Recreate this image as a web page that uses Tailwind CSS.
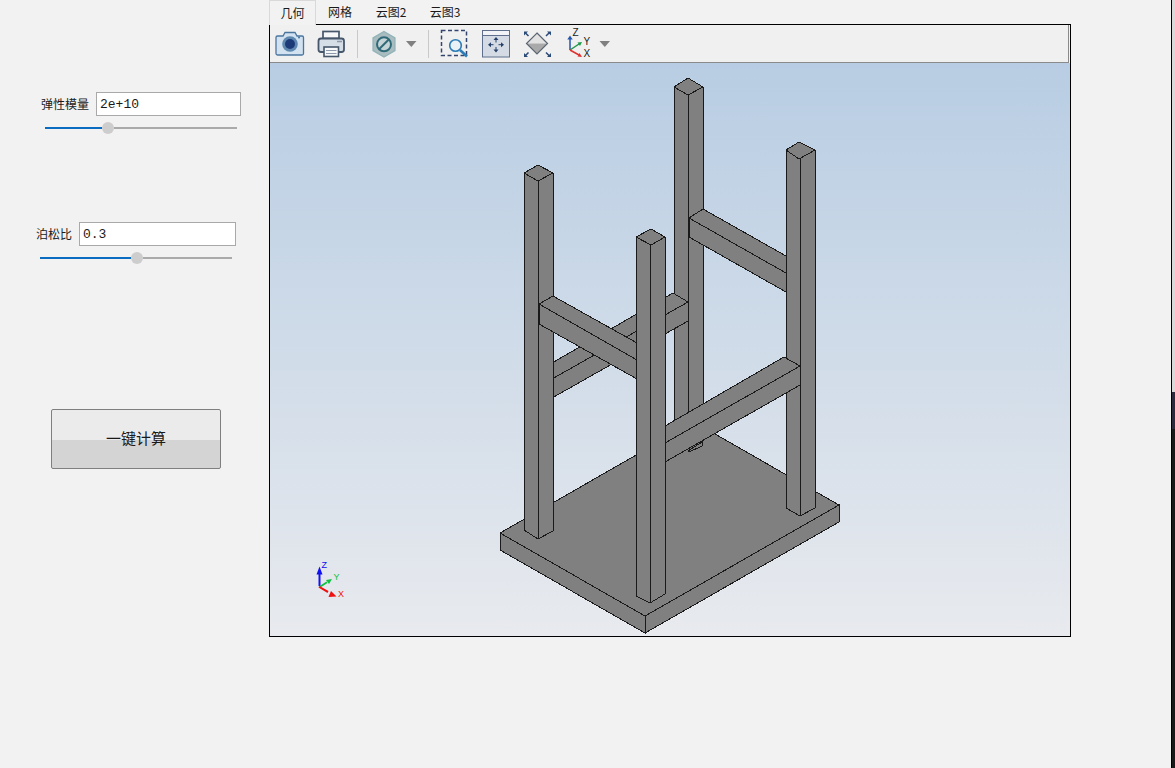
<!DOCTYPE html>
<html lang="zh">
<head>
    <meta charset="UTF-8">
    <title>几何</title>
    <script src="https://cdn.jsdelivr.net/npm/@tailwindcss/browser@4"></script>
</head>
<body class="bg-[#f2f2f2] font-['Noto_Sans_CJK_SC',sans-serif] text-[#1a1a1a] overflow-hidden">
<div class="flex h-[768px] w-[1175px]">

    <!-- 左侧参数 -->
    <aside class="w-[269px] shrink-0 pt-[92px] text-[12px]">
        <div class="flex items-center h-[24px] pl-[41px] gap-[7px]">
            <span class="w-[48px] whitespace-nowrap">弹性模量</span>
            <input value="2e+10" class="w-[145px] h-[24px] bg-white border border-[#a9a9a9] pl-[3px] text-[13px] font-['Liberation_Mono',monospace]">
        </div>
        <div class="flex items-center h-[12px] w-[192px] ml-[45px] mt-[6px]">
            <div class="w-[57px] h-[2px] bg-[#0a6cc0]"></div>
            <div class="w-[12px] h-[12px] rounded-full bg-[#cdcdcd] shrink-0"></div>
            <div class="flex-1 h-[2px] bg-[#aaaaaa]"></div>
        </div>

        <div class="flex items-center h-[24px] pl-[36px] gap-[7px] mt-[88px]">
            <span class="w-[36px] whitespace-nowrap">泊松比</span>
            <input value="0.3" class="w-[157px] h-[24px] bg-white border border-[#a9a9a9] pl-[3px] text-[13px] font-['Liberation_Mono',monospace]">
        </div>
        <div class="flex items-center h-[12px] w-[192px] ml-[40px] mt-[6px]">
            <div class="w-[91px] h-[2px] bg-[#0a6cc0]"></div>
            <div class="w-[12px] h-[12px] rounded-full bg-[#cdcdcd] shrink-0"></div>
            <div class="flex-1 h-[2px] bg-[#aaaaaa]"></div>
        </div>

        <button class="block w-[170px] h-[60px] ml-[51px] mt-[145px] pb-[2px] rounded-[2px] border border-[#7f7f7f] text-[15px] bg-[linear-gradient(#ebebeb_0,#ebebeb_30px,#d4d4d4_30px)]">一键计算</button>
    </aside>

    <!-- 主区域 -->
    <main class="w-[903px] shrink-0 border-r border-black">
        <div class="flex h-[25px] text-[12px] w-[802px]">
            <div class="relative z-10 w-[47px] h-[25px] bg-[#f2f2f2] border border-b-0 border-[#d9d9d9] flex items-center justify-center">几何</div>
            <div class="w-[48px] h-[24px] flex items-center justify-center">网格</div>
            <div class="w-[54px] h-[24px] flex items-center justify-center">云图2</div>
            <div class="w-[54px] h-[24px] flex items-center justify-center">云图3</div>
        </div>

        <div class="w-[802px] h-[613px] -mt-px border border-black flex flex-col">
            <!-- 工具栏 -->
            <div class="h-[38px] mr-px flex items-start pt-[4px] pl-[5px] bg-[#f0f0f0] border-b border-r border-[#8a8a8a] shrink-0">
                <svg class="w-[30px] h-[30px]" viewBox="275 29 30 30">
                    <path d="M277.500 36h5.500l2-3.500h10l2 3.500h5a1.500 1.500 0 0 1 1.500 1.500v16a1.500 1.500 0 0 1-1.500 1.500h-24.500a1.500 1.500 0 0 1-1.500-1.500v-16a1.500 1.500 0 0 1 1.500-1.500z" fill="#d3e2f0" stroke="#4a759f" stroke-width="1.300"/>
                    <circle cx="290" cy="44" r="7.800" fill="#5f88b0"/>
                    <circle cx="290" cy="44" r="5" fill="#1d3a78"/>
                    <circle cx="299" cy="37.500" r="1" fill="#44719f"/>
                </svg>
                <svg class="w-[30px] h-[30px] ml-[11px]" viewBox="316 29 30 30">
                    <rect x="323" y="31.500" width="16" height="7" fill="#f6f8fa" stroke="#46566b" stroke-width="1.700"/>
                    <rect x="318.500" y="38.500" width="25.500" height="13.500" rx="2.500" fill="#d5dde6" stroke="#46566b" stroke-width="1.800"/>
                    <rect x="324" y="47" width="14.500" height="9.500" fill="#f6f8fa" stroke="#46566b" stroke-width="1.600"/>
                    <path d="M326 50.500h10.500M326 53.500h10.500" stroke="#8b99aa"/>
                    <path d="M337 41.500h5" stroke="#8b99aa" stroke-width="1.500"/>
                </svg>
                <div class="w-px h-[28px] mt-px ml-[11px] bg-[#c9c9c9]"></div>
                <svg class="w-[26px] h-[30px] ml-[13px]" viewBox="371 29 26 30">
                    <path d="M384 31.500l11 6.400v12.700l-11 6.400-11-6.400v-12.700z" fill="#a9bcc0" stroke="#8fb2b6" stroke-width="1.200"/>
                    <circle cx="384" cy="44.300" r="7" fill="#c5d4d6" stroke="#2f6a78" stroke-width="2"/>
                    <path d="M379 49.300l10-10" stroke="#2f6a78" stroke-width="2"/>
                </svg>
                <svg class="w-[12px] h-[30px] ml-[8px]" viewBox="405 29 12 30">
                    <path d="M406 41h10.500l-5.200 6z" fill="#808080"/>
                </svg>
                <div class="w-px h-[28px] mt-px ml-[11px] bg-[#c9c9c9]"></div>
                <svg class="w-[29px] h-[30px] ml-[11px]" viewBox="440 29 29 30">
                    <rect x="441.500" y="30.500" width="25" height="25" fill="none" stroke="#33456e" stroke-width="1.500" stroke-dasharray="4 2.500"/>
                    <circle cx="455.500" cy="45.500" r="5.800" fill="#eaf2f8" stroke="#2c7cb6" stroke-width="1.600"/>
                    <path d="M460 50l7 6.500" stroke="#2c7cb6" stroke-width="2.600"/>
                </svg>
                <svg class="w-[30px] h-[30px] ml-[12px]" viewBox="481 29 30 30">
                    <rect x="482.500" y="30.500" width="27" height="26.500" fill="#d5dbe4" stroke="#5d6f8c"/>
                    <rect x="483" y="31" width="26" height="4" fill="#f1f3f6"/>
                    <path d="M483 35.500h26" stroke="#5d6f8c"/>
                    <path d="M496 37l2.500 3h-5zM496 52.500l-2.500-3h5zM488 44.700l3-2.500v5zM504 44.700l-3-2.500v5z" fill="#24406b"/>
                    <path d="M496 39.500v3M496 47v3M490.500 44.700h3M498.500 44.700h3" stroke="#24406b"/>
                </svg>
                <svg class="w-[30px] h-[30px] ml-[11px]" viewBox="522 29 30 30">
                    <path d="M537 33l10.500 10.500h-21z" fill="#e2e2e2"/>
                    <path d="M526.500 43.500h21l-10.500 10.500z" fill="#a9a9a9"/>
                    <path d="M537 33l10.500 10.500-10.500 10.500-10.500-10.500z" fill="none" stroke="#5b6673" stroke-width="1.200"/>
                    <path d="M525 32.500l3.500 3.500M549.500 32.500l-3.500 3.500M525 56l3.500-3.500M549.500 56l-3.500-3.500" stroke="#2a4a78" stroke-width="1.500"/>
                    <path d="M524 31.500h4l-4 4zM551 31.500h-4l4 4zM524 57v-4l4 4zM551 57v-4l-4 4z" fill="#2a4a78"/>
                </svg>
                <svg class="w-[28px] h-[34px] -mt-[2px] ml-[14px]" viewBox="566 27 28 34">
                    <path d="M570 50v-12" stroke="#2456b0" stroke-width="1.500"/>
                    <path d="M570 35.500l2.700 4h-5.400z" fill="#2456b0"/>
                    <path d="M570 50l9-6" stroke="#1f9a4a" stroke-width="1.500"/>
                    <path d="M582 42l-2 4-2.500-3.500z" fill="#1f9a4a"/>
                    <path d="M570 50l9 5" stroke="#e03030" stroke-width="1.500"/>
                    <path d="M582 57l-4.500-.4 2-3.500z" fill="#e03030"/>
                    <text x="572.500" y="36" font-size="10" font-family="Liberation Sans" fill="#222">Z</text>
                    <text x="583.500" y="44.500" font-size="10" font-family="Liberation Sans" fill="#222">Y</text>
                    <text x="583.500" y="57" font-size="10" font-family="Liberation Sans" fill="#222">X</text>
                </svg>
                <svg class="w-[12px] h-[30px] ml-[5px]" viewBox="599 29 12 30">
                    <path d="M599.500 41h10.500l-5.200 6z" fill="#808080"/>
                </svg>
            </div>

            <!-- 三维视图 -->
            <div class="flex-1 bg-linear-to-b from-[#b8cde3] to-[#e8eaee]">
                <svg class="block w-[800px] h-[573px]" viewBox="270 63 800 573" fill="#808080" stroke="#1a1a1a" stroke-width="1">
                    <g transform="translate(-1 0)" shape-rendering="crispEdges">
                        <!-- 底板 -->
                        <polygon points="501,533 695,422 840,505 646,616"/>
                        <polygon points="501,533 646,616 646,633 501,550"/>
                        <polygon points="646,616 840,505 840,522 646,633"/>
                        <!-- 后柱 -->
                        <polygon points="675,87 689,78 704,87 704,430 675,430"/>
                        <path d="M675 87L689 95L704 87M689 95V430" fill="none"/>
                        <!-- 左后横梁 -->
                        <polygon points="553,363 674,293 689,302 689,321 553,398"/>
                        <path d="M553 379L689 302" fill="none"/>
                        <!-- 左柱 -->
                        <polygon points="525,173 539,165 554,173 554,531 539,539 525,530"/>
                        <path d="M525 173L539 181L554 173M539 181V539" fill="none"/>
                        <!-- 右后横梁 -->
                        <polygon points="690,218 704,209 787,256 787,292 690,237"/>
                        <path d="M690 218L787 273" fill="none"/>
                        <!-- 右柱 -->
                        <polygon points="787,150 800,142 816,150 816,508 801,516 787,508"/>
                        <path d="M787 150L800 159L816 150M801 159V516" fill="none"/>
                        <!-- 左前横梁 -->
                        <polygon points="540,304 554,296 638,343 638,379 540,324"/>
                        <path d="M540 304L638 360" fill="none"/>
                        <!-- 右前横梁 -->
                        <polygon points="666,426 785,357 801,366 801,385 666,462"/>
                        <path d="M666 443L801 366" fill="none"/>
                        <polygon points="689,451 703,442 703,446 690,452" fill="none"/>
                        <!-- 前柱 -->
                        <polygon points="637,237 652,229 666,237 666,594 651,603 637,596"/>
                        <path d="M637 237L652 245L666 237M651 245V603" fill="none"/>
                    </g>
                    <!-- 坐标轴 -->
                    <g stroke="none">
                        <path d="M318.500 586v-13h2v13z" fill="#1010f0"/>
                        <path d="M319.500 566.500l3 8h-6z" fill="#1010f0"/>
                        <path d="M319.500 586l7-4.500 1 1.500-7 4.500z" fill="#10c040"/>
                        <path d="M332 579l-3 5-3-4z" fill="#10c040"/>
                        <path d="M319.500 586l9 5-1 2-9-5.500z" fill="#f01010"/>
                        <path d="M336.500 596.500l-8 .5 2.500-6z" fill="#f01010"/>
                        <text x="321.500" y="568" font-size="9" font-family="Liberation Sans" fill="#1010f0">Z</text>
                        <text x="333.500" y="579.500" font-size="9" font-family="Liberation Sans" fill="#10c040">Y</text>
                        <text x="338" y="597" font-size="9" font-family="Liberation Sans" fill="#f01010">X</text>
                    </g>
                </svg>
            </div>
        </div>
    </main>

    <!-- 右侧边缘 -->
    <div class="w-[3px] shrink-0 flex flex-col">
        <div class="h-[392px] bg-[#d9d9d9]"></div>
        <div class="h-[37px] bg-[#2b2b3d]"></div>
        <div class="flex-1 bg-[#1a1a1a]"></div>
    </div>
</div>
</body>
</html>
